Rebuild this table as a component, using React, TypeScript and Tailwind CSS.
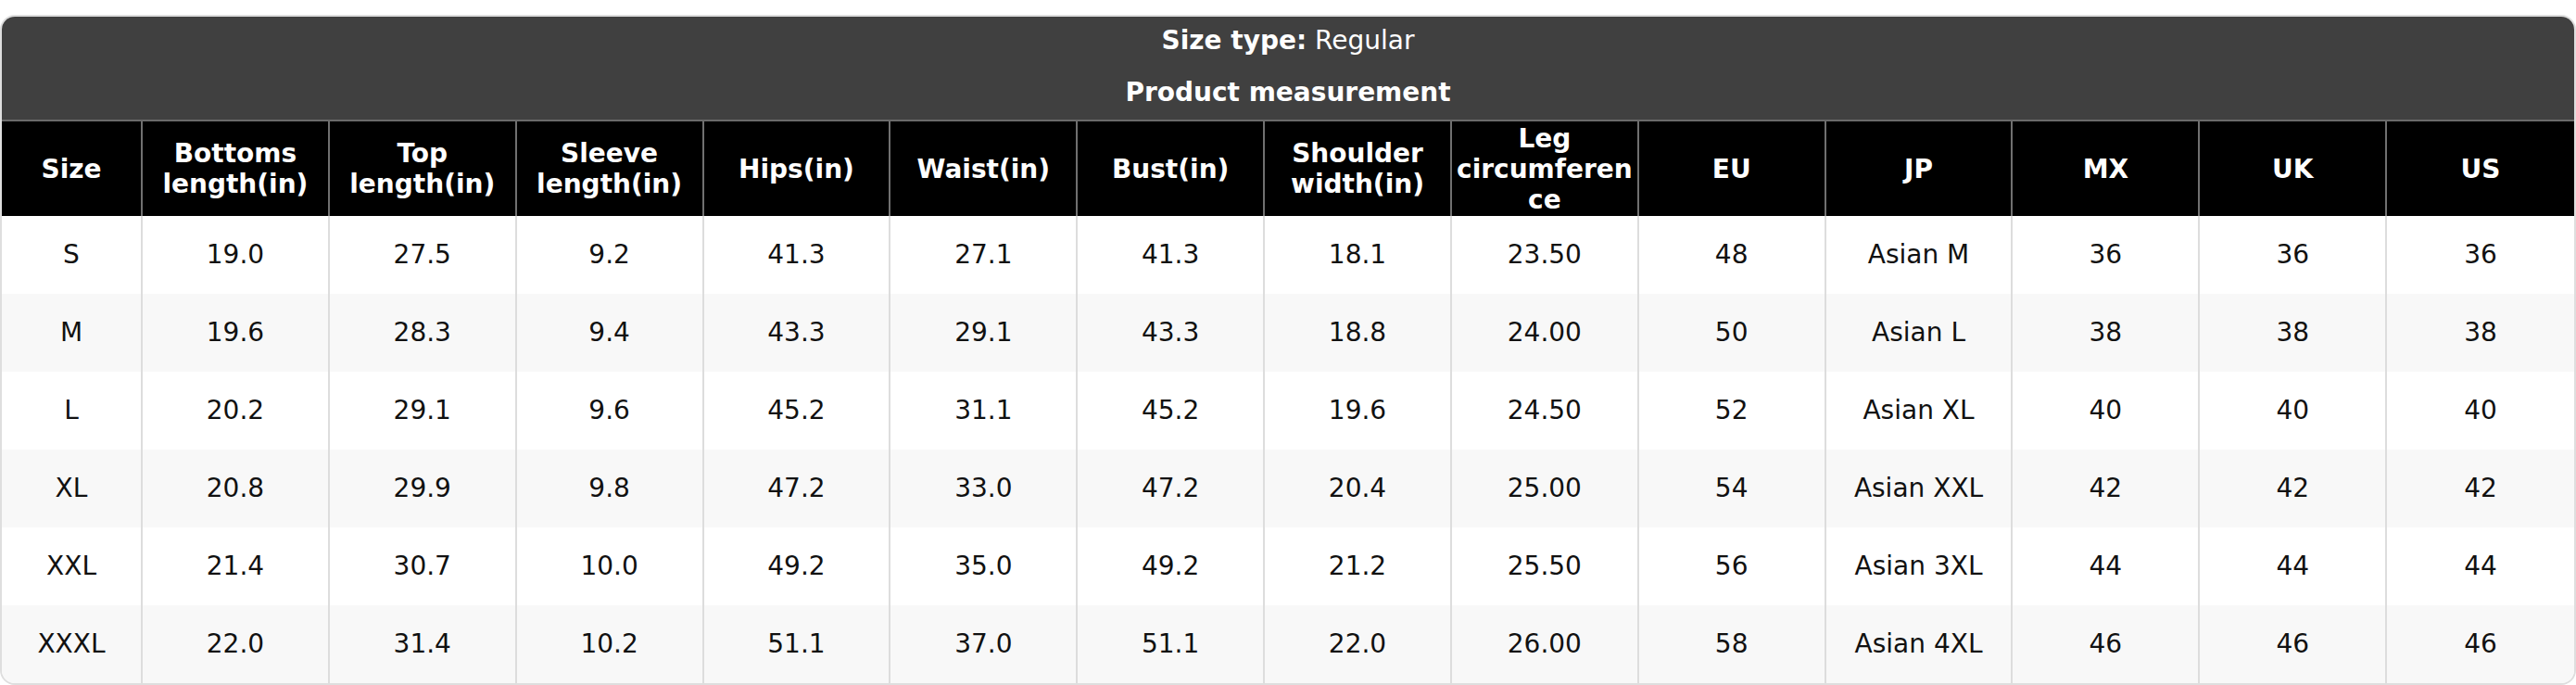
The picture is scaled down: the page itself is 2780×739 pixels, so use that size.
import React from 'react';

const headers = [
  'Size',
  'Bottoms length(in)',
  'Top length(in)',
  'Sleeve length(in)',
  'Hips(in)',
  'Waist(in)',
  'Bust(in)',
  'Shoulder width(in)',
  'Leg circumference',
  'EU',
  'JP',
  'MX',
  'UK',
  'US',
];

const rows = [
  ['S', '19.0', '27.5', '9.2', '41.3', '27.1', '41.3', '18.1', '23.50', '48', 'Asian M', '36', '36', '36'],
  ['M', '19.6', '28.3', '9.4', '43.3', '29.1', '43.3', '18.8', '24.00', '50', 'Asian L', '38', '38', '38'],
  ['L', '20.2', '29.1', '9.6', '45.2', '31.1', '45.2', '19.6', '24.50', '52', 'Asian XL', '40', '40', '40'],
  ['XL', '20.8', '29.9', '9.8', '47.2', '33.0', '47.2', '20.4', '25.00', '54', 'Asian XXL', '42', '42', '42'],
  ['XXL', '21.4', '30.7', '10.0', '49.2', '35.0', '49.2', '21.2', '25.50', '56', 'Asian 3XL', '44', '44', '44'],
  ['XXXL', '22.0', '31.4', '10.2', '51.1', '37.0', '51.1', '22.0', '26.00', '58', 'Asian 4XL', '46', '46', '46'],
];

const cols = 'grid grid-cols-[152px_repeat(13,minmax(0,1fr))]';

export default function App() {
  return (
    <div className="min-h-screen bg-white pt-4 font-['DejaVu_Sans',sans-serif] text-[28px]">
      <div className="overflow-hidden rounded-2xl border-2 border-[#dedede]">
        <div className="bg-[#404040] text-center text-white">
          <div className="pt-[10px] pb-[12px] leading-[32px]">
            <span className="font-bold">Size type:</span> Regular
          </div>
          <div className="pt-[12px] pb-[13px] font-bold leading-[32px]">Product measurement</div>
        </div>

        <div className={`${cols} h-[104px] border-t-2 border-[#6a6a6a] bg-black text-white`}>
          {headers.map((h, i) => (
            <div
              key={h}
              className={`flex min-w-0 items-center justify-center px-[3px] text-center font-bold leading-[33px] ${
                i < headers.length - 1 ? 'border-r-2 border-[#707070]' : ''
              }`}
            >
              <span className="min-w-0 [overflow-wrap:anywhere]">{h}</span>
            </div>
          ))}
        </div>

        {rows.map((r, ri) => (
          <div key={r[0]} className={`${cols} h-[84px] text-[#111] ${ri % 2 === 1 ? 'bg-[#f8f8f8]' : 'bg-white'}`}>
            {r.map((c, ci) => (
              <div
                key={ci}
                className={`flex items-center justify-center text-center ${
                  ci < r.length - 1 ? 'border-r-2 border-[#dddddd]' : ''
                }`}
              >
                {c}
              </div>
            ))}
          </div>
        ))}
      </div>
    </div>
  );
}
